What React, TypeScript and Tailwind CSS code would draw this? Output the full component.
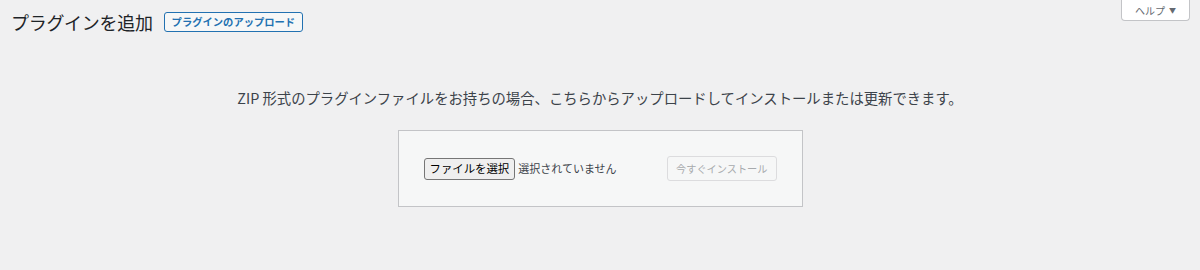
import React from "react";

export default function App() {
  const font = { fontFamily: '"Noto Sans CJK JP", "Noto Sans", sans-serif' };
  return (
    <div className="relative w-[1200px] h-[270px] bg-[#f0f0f1] text-[#3c434a] overflow-hidden" style={font}>
      <div className="absolute right-[10px] top-0 h-[21px] w-[69px] bg-white border border-t-0 border-[#c3c4c7] rounded-b-[4px] flex items-center justify-center gap-[4px] text-[10px] text-[#646970]">
        <span>ヘルプ</span>
        <span className="text-[7px] leading-none">▼</span>
      </div>
      <div className="flex items-center gap-[11px] pl-[11px] pt-[11px]">
        <h1 className="text-[18px] leading-[22px] text-[#1d2327] tracking-[-0.3px]">プラグインを追加</h1>
        <span className="h-[20px] px-[7px] flex items-center border border-[#2271b1] rounded-[3px] bg-[#f6f7f7] text-[#2271b1] text-[10.3px] font-semibold">プラグインのアップロード</span>
      </div>
      <p className="mt-[55px] text-center text-[14.35px] leading-[20px] text-[#3c434a]">
        ZIP 形式のプラグインファイルをお持ちの場合、こちらからアップロードしてインストールまたは更新できます。
      </p>
      <div className="mt-[22px] mx-auto w-[405px] h-[77px] border border-[#c3c4c7] bg-[#f6f7f7] flex items-center pl-[25px] pr-[25px]">
        <span className="h-[22px] px-[5px] flex items-center border border-[#767676] rounded-[3px] bg-[#efefef] text-[11.4px] text-black">ファイルを選択</span>
        <span className="ml-[3px] text-[11px] text-[#3c434a]">選択されていません</span>
        <span className="ml-auto h-[25px] px-[8px] flex items-center border border-[#dcdcde] rounded-[3px] bg-[#f6f7f7] text-[10.2px] text-[#a7aaad]">今すぐインストール</span>
      </div>
    </div>
  );
}
